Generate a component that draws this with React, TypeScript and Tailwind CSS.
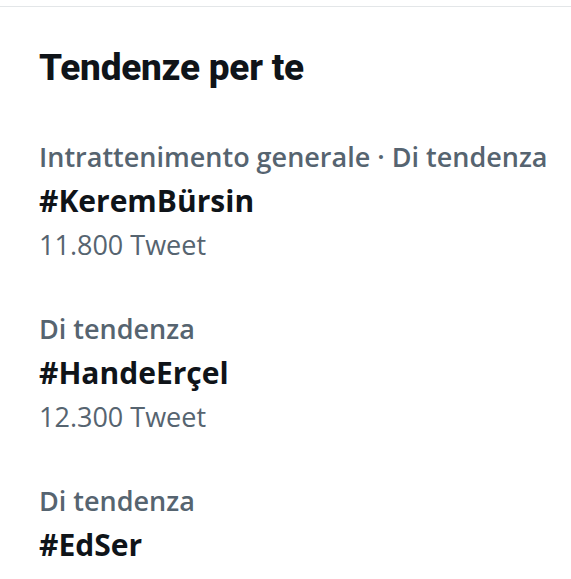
import React from 'react';

const trends = [
  { category: 'Intrattenimento generale · Di tendenza', tag: '#KeremBürsin', count: '11.800 Tweet' },
  { category: 'Di tendenza', tag: '#HandeErçel', count: '12.300 Tweet' },
  { category: 'Di tendenza', tag: '#EdSer', count: null },
];

export default function App() {
  return (
    <div className="min-h-screen bg-white overflow-hidden" style={{ fontFamily: '"Open Sans", "Noto Sans", sans-serif' }}>
      <div className="pt-[6px]">
        <div className="border-t border-[#e3e6e8]" />
      </div>
      <div className="pl-[39px] pr-4">
        <h2
          className="pt-[41px] text-[37px] leading-[40px] font-extrabold text-[#0f1419] tracking-[-0.25px]"
          style={{ fontFamily: 'Roboto, "Liberation Sans", sans-serif' }}
        >
          Tendenze per te
        </h2>
        <div className="pt-[47px]">
          {trends.map((t, i) => (
            <div key={i} className="pb-[40px]">
              <p className="text-[27px] leading-[44px] font-semibold text-[#566470]">{t.category}</p>
              <p className="text-[30px] leading-[44px] font-bold text-[#0f1419]">{t.tag}</p>
              {t.count && <p className="text-[27px] leading-[44px] text-[#566470]">{t.count}</p>}
            </div>
          ))}
        </div>
      </div>
    </div>
  );
}
